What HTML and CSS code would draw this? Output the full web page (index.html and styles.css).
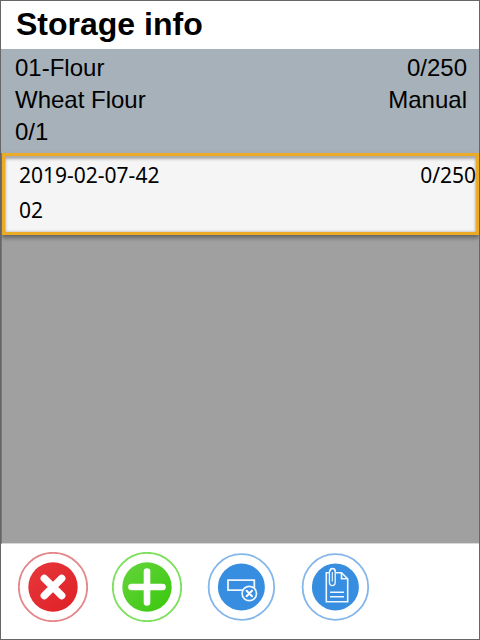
FILE: index.html
```html
<!DOCTYPE html>
<html lang="en">
<head>
<meta charset="utf-8">
<title>Storage info</title>
<link rel="stylesheet" href="styles.css">
</head>
<body>
<main class="screen">
  <header class="title-bar"><h1>Storage info</h1></header>
  <section class="summary">
    <div class="row"><span>01-Flour</span><span>0/250</span></div>
    <div class="row"><span>Wheat Flour</span><span>Manual</span></div>
    <div class="row"><span>0/1</span></div>
  </section>
  <section class="list">
    <button class="item" type="button">
      <span class="row"><span>2019-02-07-42</span><span>0/250</span></span>
      <span class="row"><span>02</span></span>
    </button>
  </section>
  <footer class="actions">
    <button class="action" type="button" aria-label="Cancel">
      <svg viewBox="0 0 70 70">
        <defs><linearGradient id="red" x1="0" y1="0" x2="1" y2="1"><stop offset="0" stop-color="#e6383c"/><stop offset="1" stop-color="#de2026"/></linearGradient></defs>
        <circle cx="35" cy="35" r="34.2" fill="#fff" stroke="#e3878b" stroke-width="1.8"/>
        <circle cx="35" cy="35" r="24.7" fill="url(#red)"/>
        <path d="M26.3 26.3 43.7 43.7M43.7 26.3 26.3 43.7" stroke="#fff" stroke-width="7.4" stroke-linecap="round"/>
      </svg>
    </button>
    <button class="action" type="button" aria-label="Add">
      <svg viewBox="0 0 70 70">
        <defs><linearGradient id="green" x1="0" y1="0" x2="1" y2="1"><stop offset="0" stop-color="#65d53c"/><stop offset="1" stop-color="#39c70d"/></linearGradient></defs>
        <circle cx="35" cy="35" r="34.2" fill="#fff" stroke="#7be05a" stroke-width="1.8"/>
        <circle cx="35" cy="35" r="24.7" fill="url(#green)"/>
        <path d="M35 19.5V50.5M19.5 35H50.5" stroke="#fff" stroke-width="6.6" stroke-linecap="round"/>
      </svg>
    </button>
    <button class="action" type="button" aria-label="Remove storage unit">
      <svg viewBox="0 0 70 70">
        <circle cx="35.4" cy="35" r="32.8" fill="#fff" stroke="#85b6ea" stroke-width="1.8"/>
        <circle cx="35.4" cy="35" r="23.5" fill="#378de0"/>
        <path d="M22 28.2H48.3V38.2H22Z" fill="none" stroke="#eef6ff" stroke-width="1.8"/>
        <circle cx="43.3" cy="41.5" r="7.2" fill="#378de0" stroke="#eef6ff" stroke-width="1.7"/>
        <path d="M40.6 38.8 46 44.2M46 38.8 40.6 44.2" stroke="#fff" stroke-width="2" stroke-linecap="round"/>
      </svg>
    </button>
    <button class="action" type="button" aria-label="Attached documents">
      <svg viewBox="0 0 70 70">
        <circle cx="35.4" cy="35" r="32.8" fill="#fff" stroke="#85b6ea" stroke-width="1.8"/>
        <circle cx="35.4" cy="35" r="23.5" fill="#378de0"/>
        <g fill="none" stroke="#f2f8ff" stroke-width="1.6">
          <path d="M29 20.8H26.3V49.8H47.7V26.8L41.5 20.8H35.5"/>
          <path d="M41.5 20.8V26.8H47.7"/>
          <path d="M30 40.2H44M30 44.7H44" stroke-width="1.6"/>
          <path d="M29.4 22V30.6A2.9 3 0 0 0 35.2 30.6V19.4A2.5 2.8 0 0 0 30.2 19.4" stroke-width="1.3"/>
          <path d="M29.4 22V19.4A2.9 3 0 0 1 35.2 19.4M32.3 20V29.5" stroke-width="1.1"/>
        </g>
      </svg>
    </button>
  </footer>
</main>
</body>
</html>
```
FILE: styles.css
```css
* { box-sizing: border-box; }

body {
  margin: 0;
  color: #000;
  font-family: "Liberation Sans", Arial, sans-serif;
}

.screen {
  display: flex;
  flex-direction: column;
  min-height: 100vh;
  border: 1px solid #666;
  background: #fff;
}

.title-bar {
  padding: 3px 15px 5px;
}

h1 {
  margin: 0;
  font-size: 32px;
  line-height: 40px;
}

.row {
  display: flex;
  justify-content: space-between;
}

.summary {
  padding: 3px 12px 5px 14px;
  background: #a7b1b9;
  font-size: 24px;
  line-height: 32px;
}

.list {
  flex: 1;
  border-left: 1px solid #777;
  border-bottom: 1px solid #d8d8d8;
  background: #a0a0a0;
}

.item {
  display: block;
  width: 100%;
  padding: 2px 0 4px 14px;
  border: 3px solid #ebab27;
  background: #f5f5f5;
  box-shadow: inset 0 3px 3px #aaa, inset 0 0 3px #aaa, 0 3px 4px #666;
  color: #000;
  font-family: "Noto Sans", Tahoma, sans-serif;
  font-size: 21px;
  line-height: 35px;
  text-align: left;
}

.actions {
  display: flex;
  gap: 24px;
  padding: 8px 17px 17px;
}

.action {
  width: 70px;
  height: 70px;
  padding: 0;
  border: 0;
  border-radius: 50%;
  background: none;
}

.action svg {
  display: block;
  width: 100%;
  height: 100%;
}
```
